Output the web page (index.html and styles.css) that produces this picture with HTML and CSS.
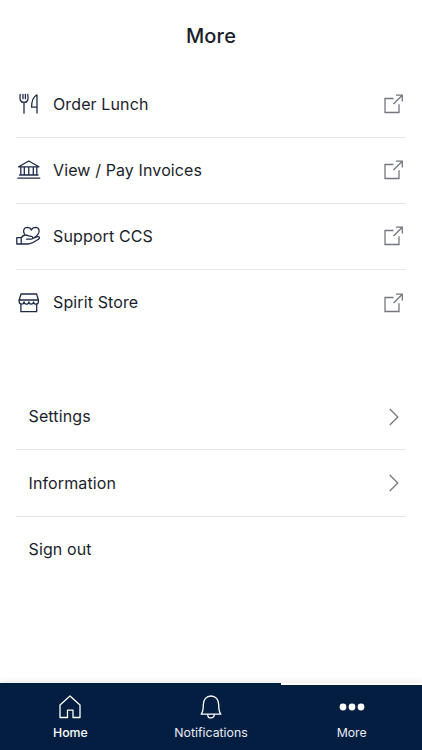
FILE: index.html
```html
<!DOCTYPE html>
<html lang="en">
<head>
  <meta charset="utf-8" />
  <title>More</title>
  <meta name="viewport" content="width=device-width, initial-scale=1.0">
  <link rel="stylesheet" href="styles.css">
</head>
<body>
  <!-- shared icons -->
  <svg class="defs" width="0" height="0">
    <symbol id="external" viewBox="0 0 22 22">
      <path d="M11.5 5.5H3v14h14v-8.3M11.5 11L20.3 2.2M14 2.2h6.3v6.3" />
    </symbol>
    <symbol id="chevron" viewBox="0 0 22 22">
      <path d="M7.8 3l8 8-8 8" />
    </symbol>
  </svg>

  <header class="header"><h1>More</h1></header>

  <main class="content">
    <ul class="list links">
      <li class="row">
        <svg class="icon" viewBox="0 0 26 26">
          <path d="M4.2 3.5c-.8 5 0 8 3.8 8s4.6-3 3.8-8M8 11.5v10.7M7 3.5v4.2M9.4 3.5v4.2" />
          <path d="M21 22V3.8c-3 1.6-5.4 6-5.4 12.4H21" />
        </svg>
        <span class="label">Order Lunch</span>
        <svg class="action"><use href="#external" /></svg>
      </li>
      <li class="row">
        <svg class="icon" viewBox="0 0 26 26">
          <path d="M2.6 9.8L12.8 4 23 9.8zM3.6 18h18.4M1.8 21.1h22M4.8 10v8M8.3 10v8M12.8 10v8M17.3 10v8M20.8 10v8" />
        </svg>
        <span class="label">View / Pay Invoices</span>
        <svg class="action"><use href="#external" /></svg>
      </li>
      <li class="row">
        <svg class="icon" viewBox="0 0 26 26">
          <path d="M8.5 11C6.8 8.4 7.4 4.6 11.2 4.4c2 0 3.5 1 4.2 2.7.7-1.7 2.2-2.7 4.2-2.7 3.8.2 4.6 4.3 2.3 7-1.1 1.3-2.3 2.4-3.5 3.2" />
          <path d="M.8 14.7h4.4V21H.8zM5.2 15c1.4-2.4 3-3.1 4.6-3 1.8.1 2.7 1.2 4.6 1.2 2.8 0 3.3 2.7.8 3h-4.5M16.5 15.5l5-1.8c1.8-.5 2.7 1.3 1.1 2.4-4.8 3.2-7.3 4.9-10.6 4.9H5.2" />
        </svg>
        <span class="label">Support CCS</span>
        <svg class="action"><use href="#external" /></svg>
      </li>
      <li class="row">
        <svg class="icon" viewBox="0 0 26 26">
          <path d="M5 4h15.6l1.8 6H3.2zM4.9 14.2v7.5h15.8v-7.5" />
          <path d="M3.2 10v1.8a2.4 2.4 0 0 0 4.8 0 2.4 2.4 0 0 0 4.8 0 2.4 2.4 0 0 0 4.8 0 2.4 2.4 0 0 0 4.8 0V10" />
        </svg>
        <span class="label">Spirit Store</span>
        <svg class="action"><use href="#external" /></svg>
      </li>
    </ul>

    <ul class="list options">
      <li class="row">
        <span class="label">Settings</span>
        <svg class="action"><use href="#chevron" /></svg>
      </li>
      <li class="row">
        <span class="label">Information</span>
        <svg class="action"><use href="#chevron" /></svg>
      </li>
      <li class="row"><span class="label">Sign out</span></li>
    </ul>
  </main>

  <nav class="tabs">
    <a class="tab current">
      <svg class="tab-icon" viewBox="0 0 26 26">
        <path d="M3 11L13 2l10 9v12.5h-7v-7.3h-5.5v7.3H3z" />
      </svg>
      <span>Home</span>
    </a>
    <a class="tab">
      <svg class="tab-icon" viewBox="0 0 26 26">
        <path d="M3.2 20.2c1.7-2.1 2.1-4.5 2.1-9.5C5.3 5.5 8.5 2 13 2s7.7 3.5 7.7 8.7c0 5 .4 7.4 2.1 9.5zM9.7 20.4c0 4.7 6.6 4.7 6.6 0" />
      </svg>
      <span>Notifications</span>
    </a>
    <a class="tab more">
      <svg class="tab-icon dots" viewBox="0 0 26 26">
        <circle cx="4" cy="13" r="3.4" />
        <circle cx="13" cy="13" r="3.4" />
        <circle cx="22" cy="13" r="3.4" />
      </svg>
      <span>More</span>
    </a>
  </nav>
</body>
</html>
```
FILE: styles.css
```css
* {
  box-sizing: border-box;
}
body {
  display: flex;
  flex-direction: column;
  height: 100vh;
  margin: 0;
  overflow: hidden;
  background: #fff;
  color: #1b1e2b;
  font-family: Inter, "Liberation Sans", sans-serif;
}
.defs {
  position: absolute;
}
.header {
  height: 71.5px;
  text-align: center;
}
.header h1 {
  margin: 0;
  font-size: 20px;
  font-weight: 500;
  line-height: 73px;
  letter-spacing: 0.2px;
}
.content {
  flex: 1;
  padding: 0 16px;
}
.list {
  margin: 0;
  padding: 0;
  list-style: none;
}
.row {
  display: flex;
  align-items: center;
  height: 66.2px;
  border-bottom: 1px solid #e6e6e8;
}
.row:last-child {
  border-bottom-color: transparent;
}
.options {
  margin-top: 48px;
}
.label {
  flex: 1;
  padding-bottom: 1px;
  font-size: 16px;
  line-height: 20px;
  letter-spacing: 0.12px;
}
.options .label {
  padding-left: 12.5px;
}
.icon {
  width: 26px;
  height: 26px;
  margin-right: 11px;
  fill: none;
  stroke: #1d2b49;
  stroke-width: 1.3;
  stroke-linejoin: round;
  stroke-linecap: round;
}
.action {
  width: 22px;
  height: 22px;
  margin-right: 2px;
  fill: none;
  stroke: #74777d;
  stroke-width: 1.3;
}

/* bottom bar */
.tabs {
  display: flex;
  height: 67px;
  box-shadow: 0 -1px 7px rgba(0, 0, 0, 0.1);
  background: #fff;
}
.tab {
  display: flex;
  flex: 1;
  flex-direction: column;
  align-items: center;
  padding-top: 11px;
  background: #041e42;
  color: #e9ecf3;
  font-size: 12.3px;
  line-height: 16px;
}
.tab.current {
  color: #fff;
  font-weight: 500;
}
.tab.more {
  border-top: 2px solid #fff;
  padding-top: 9px;
}
.tab-icon {
  width: 26px;
  height: 26px;
  margin-bottom: 5px;
  fill: none;
  stroke: #fff;
  stroke-width: 1.3;
  stroke-linejoin: round;
}
.dots {
  fill: #fff;
  stroke: none;
}
```
